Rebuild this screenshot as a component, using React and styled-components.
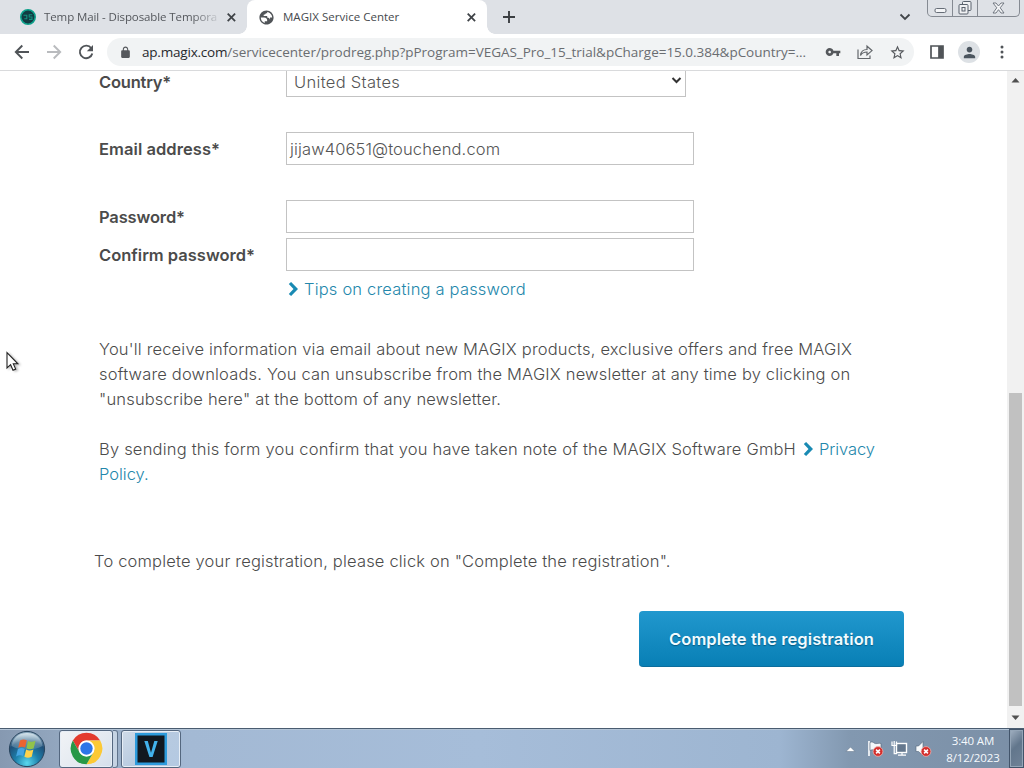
import React from 'react';
import styled, { createGlobalStyle } from 'styled-components';

const GlobalStyle = createGlobalStyle`
  *, *::before, *::after { box-sizing: border-box; }
  body { margin: 0; background: #fff; overflow: hidden; }
  svg { display: block; flex: none; }
`;

const Screen = styled.div`
  position: relative;
  display: flex;
  flex-direction: column;
  width: 1024px;
  height: 768px;
  overflow: hidden;
  font-family: "Open Sans", "Noto Sans", sans-serif;
`;

/* Browser frame */
const TabStrip = styled.header`
  display: flex;
  height: 34px;
  background: #dee1e6;
`;

const Tab = styled.div`
  position: relative;
  display: flex;
  align-items: center;
  width: ${(p) => p.$width}px;
  padding: 0 10px 0 ${(p) => p.$inset}px;
  color: ${(p) => (p.$active ? '#45494d' : '#54575c')};
  background: ${(p) => (p.$active ? '#fff' : 'transparent')};
  border-radius: 8px 8px 0 0;
  font-size: 11.5px;
  gap: 8px;

  &::before, &::after {
    content: ${(p) => (p.$active ? '""' : 'none')};
    position: absolute;
    bottom: 0;
    width: 8px;
    height: 8px;
  }
  &::before { left: -8px; background: radial-gradient(circle at 0 0, transparent 7.5px, #fff 8px); }
  &::after { right: -8px; background: radial-gradient(circle at 100% 0, transparent 7.5px, #fff 8px); }
`;

const TabTitle = styled.span`
  flex: 1;
  overflow: hidden;
  white-space: nowrap;
  line-height: 18px;
  letter-spacing: ${(p) => p.$tracking}px;
  ${(p) => p.$fade && 'mask-image: linear-gradient(90deg, #000 148px, transparent 178px);'}
`;

const NewTab = styled.div`
  display: flex;
  align-items: center;
  padding-left: 15px;
`;

const StripEnd = styled.div`
  display: flex;
  align-items: flex-start;
  margin-left: auto;
  gap: 16px;
  padding-right: 4px;
`;

const TabSearch = styled.div`
  padding-top: 13px;
`;

const WindowButtons = styled.div`
  display: flex;
  height: 17px;
  border: 1px solid #858a92;
  border-top: 0;
  border-radius: 0 0 5px 5px;
`;

const WindowButton = styled.div`
  display: flex;
  align-items: center;
  justify-content: center;
  width: ${(p) => p.$width}px;
  & + & { border-left: 1px solid #858a92; }
`;

const Toolbar = styled.nav`
  display: flex;
  align-items: center;
  height: 37px;
  padding: 0 14px;
  border-bottom: 1px solid #d9dadc;
  background: #fff;
`;

const NavButtons = styled.div`
  display: flex;
  gap: 16px;
`;

const AddressBar = styled.div`
  display: flex;
  align-items: center;
  width: 808px;
  height: 28px;
  margin-left: 13px;
  padding: 0 8px 0 12px;
  border-radius: 14px;
  background: #f1f3f4;
`;

const Url = styled.span`
  flex: 1;
  margin-left: 10px;
  white-space: nowrap;
  font-size: 13.5px;
  line-height: 20px;
  letter-spacing: -0.025px;
  color: #6a6d71;
`;

const Host = styled.span`
  color: #27292c;
  letter-spacing: -0.2px;
`;

const BarActions = styled.div`
  display: flex;
  gap: 16px;
`;

const ToolbarEnd = styled.div`
  display: flex;
  align-items: center;
  margin-left: 16px;
  gap: 14px;
`;

const Avatar = styled.div`
  display: flex;
  align-items: center;
  justify-content: center;
  width: 22px;
  height: 22px;
  border-radius: 50%;
  background: #dde1e5;
`;

/* Page */
const Viewport = styled.div`
  display: flex;
  height: 657px;
  overflow: hidden;
`;

const Page = styled.main`
  flex: 1;
  padding-left: 99px;
  font-family: Inter, "Open Sans", sans-serif;
  font-size: 16.5px;
  font-weight: 350;
  line-height: 25px;
  color: #4b4b4b;
`;

const Form = styled.form`
  display: flex;
  flex-direction: column;
  margin-top: -7px;
`;

const Field = styled.div`
  display: flex;
  align-items: center;
  height: 33px;
  margin-bottom: ${(p) => p.$gap}px;
`;

const Label = styled.label`
  width: 187px;
  padding-top: ${(p) => (p.$low ? 4 : 2)}px;
  font-weight: 600;
  letter-spacing: ${(p) => p.$tracking}px;
`;

const Box = styled.div`
  display: flex;
  align-items: center;
  justify-content: space-between;
  width: ${(p) => (p.$select ? 400 : 408)}px;
  height: 33px;
  padding: ${(p) => (p.$select ? '4px 3px 0 7px' : '2px 3px 0')};
  border: 1px solid #c3c3c3;
  background: #fff;
  color: #555;
  letter-spacing: ${(p) => p.$tracking || 0}px;
`;

const SelectArrow = styled.svg`
  margin-top: -3px;
`;

const TipLine = styled.div`
  display: flex;
  margin-left: 187px;
`;

const Link = styled.a`
  display: inline-flex;
  align-items: center;
  color: #2387ab;
  letter-spacing: ${(p) => p.$tracking}px;
  svg { margin: -2px 5px 0 2px; }
`;

const Paragraph = styled.p`
  display: flex;
  flex-direction: column;
  margin: ${(p) => p.$top}px 0 0 ${(p) => p.$shift || 0}px;
`;

const Line = styled.span`
  display: flex;
  white-space: pre;
  letter-spacing: ${(p) => p.$tracking}px;
`;

const Submit = styled.button`
  width: 265px;
  height: 56px;
  margin: 37px 0 0 540px;
  padding: 2px 0 0;
  border: 0;
  border-bottom: 1px solid #0b6d9c;
  border-radius: 4px;
  background: linear-gradient(#2198ce, #087fb5);
  color: #f1fbff;
  font: 600 16.5px/25px Inter, sans-serif;
  letter-spacing: 0.1px;
  text-shadow: 0 1px 1px #075b83;
`;

const Scrollbar = styled.div`
  display: flex;
  flex-direction: column;
  align-items: center;
  width: 17px;
  padding: 6px 0 7px;
  background: #f1f1f1;
`;

const Thumb = styled.div`
  width: 13px;
  height: 313px;
  margin: auto 0 9px;
  background: #c1c1c1;
`;

const Pointer = styled.div`
  position: absolute;
  left: 6px;
  top: 351px;
  filter: drop-shadow(2px 1px 1px #0004);
`;

/* Taskbar */
const Taskbar = styled.footer`
  display: flex;
  align-items: center;
  height: 40px;
  border-top: 1px solid #4a5c70;
  background: linear-gradient(90deg, #8699b1 0, #93a7bf 60px, #a3b9d4 190px, #a6bdd9 480px, #9db5d1 780px, #8298b0 850px, #7b8fa6 1024px);
  box-shadow: inset 0 1px #b4c5d7;
`;

const TaskButton = styled.div`
  display: flex;
  align-items: center;
  justify-content: center;
  width: ${(p) => p.$width}px;
  height: 38px;
  margin-left: ${(p) => p.$gap}px;
  border: 1px solid #54677f;
  border-radius: 3px;
  background: ${(p) => (p.$active ? 'linear-gradient(135deg, #f1f3f6, #e3e9f0 60%, #d4dfeb)' : 'linear-gradient(135deg, #d0dbe8, #b7cae0 50%, #b4c9e2)')};
  box-shadow: inset 0 0 0 1px #e7eef6;
`;

const StackEdge = styled.div`
  width: 5px;
  height: 38px;
  border: 1px solid #60748c;
  border-left: 0;
  border-radius: 0 3px 3px 0;
  background: #c5d3e3;
`;

const Orb = styled.div`
  margin-left: 8px;
`;

const Tray = styled.div`
  display: flex;
  align-items: center;
  height: 100%;
  margin-left: auto;
`;

const TrayIcons = styled.div`
  display: flex;
  align-items: center;
  gap: 7px;
`;

const TrayArrow = styled.svg`
  margin-right: 3px;
`;

const Clock = styled.div`
  width: 60px;
  margin: 0 6px 0 11px;
  text-align: center;
  font-size: 11.5px;
  line-height: 17px;
  letter-spacing: -0.12px;
  color: #f5f9fd;
`;

const ShowDesktop = styled.div`
  width: 15px;
  height: 100%;
  border: 1px solid #42546a;
  background: linear-gradient(135deg, #a2b1c2, #62768c 45%, #708297);
  box-shadow: inset 0 0 0 1px #94a5b7;
`;

const CloseIcon = () => (
  <svg width="11" height="11" viewBox="0 0 11 11"><path d="M1.7 1.7l7.4 7.4M9.1 1.7L1.7 9.1" stroke="#3f4347" strokeWidth="1.8" /></svg>
);

const Material = ({ d, fill = '#55585c', size = 16 }) => (
  <svg width={size} height={size} viewBox="0 0 24 24" fill={fill}><path d={d} /></svg>
);

const LinkArrow = () => (
  <svg width="11" height="14" viewBox="0 0 11 14"><path d="M.8 2.1L3.1 0 10 7l-6.900 7L.8 11.900 5.500 7z" fill="#198ab3" /></svg>
);

const TempMailIcon = () => (
  <svg width="16" height="16" viewBox="0 0 16 16">
    <circle cx="8" cy="8" r="7.2" fill="#113c42" stroke="#0da18b" strokeWidth="1.6" />
    <path d="M3.500 6.200h3.300v3.500H4.300M12.300 5.700H9.200V8h2.800v2.400H9" fill="none" stroke="#15917f" strokeWidth="1.1" />
  </svg>
);

const WindowsOrb = () => (
  <svg width="38" height="38" viewBox="0 0 38 38">
    <defs>
      <radialGradient id="orb" cx=".5" cy=".9" r=".85">
        <stop offset="0" stopColor="#5bd8ee" /><stop offset=".4" stopColor="#1d80ab" /><stop offset=".75" stopColor="#1f4f78" /><stop offset="1" stopColor="#87a5bb" />
      </radialGradient>
      <linearGradient id="gloss" x2="0" y2="1"><stop stopColor="#e5f0f5" stopOpacity=".85" /><stop offset="1" stopColor="#8eb2c6" stopOpacity=".25" /></linearGradient>
    </defs>
    <circle cx="19" cy="19" r="17.6" fill="url(#orb)" stroke="#28445d" />
    <path d="M3.5 16C5 7 11 3 19 3s14 4 15.500 13C25 21 13 21 3.500 16z" fill="url(#gloss)" />
    <path d="M12 10.500c2.500-1.500 4.500-1.400 6.800-.2l-1.700 7.300c-2.300-1.200-4.400-1.100-6.900.2z" fill="#ed6330" />
    <path d="M20 10.900c2.400 1.300 4.700 1.300 7.500-.1l-1.800 7.400c-2.600 1.400-4.900 1.300-7.300 0z" fill="#91c34b" />
    <path d="M9.900 19.100c2.500-1.300 4.600-1.400 6.900-.2l-1.700 7.200c-2.300-1.200-4.400-1.100-7 .3z" fill="#45a5e2" />
    <path d="M18.100 19.400c2.400 1.300 4.600 1.300 7.300 0l-1.700 7.300c-2.700 1.400-4.900 1.300-7.300 0z" fill="#ffd34b" />
  </svg>
);

const ChromeLogo = () => (
  <svg width="33" height="33" viewBox="0 0 48 48">
    <path d="M4.080 12.500A23 23 0 0 1 43.920 12.500L24 12.500A11.500 11.500 0 0 0 14.040 29.750z" fill="#e33b2e" />
    <path d="M43.920 12.500A23 23 0 0 1 24 47L33.960 29.750A11.500 11.500 0 0 0 24 12.500z" fill="#fcc934" />
    <path d="M24 47A23 23 0 0 1 4.080 12.500L14.040 29.750A11.500 11.500 0 0 0 33.960 29.750z" fill="#279847" />
    <circle cx="24" cy="24" r="11.500" fill="#fff" /><circle cx="24" cy="24" r="9" fill="#2b75e8" />
  </svg>
);

const VegasLogo = () => (
  <svg width="32" height="32" viewBox="0 0 32 32">
    <rect width="32" height="32" fill="#2d9bdc" /><rect x="2.500" y="2.500" width="27" height="27" fill="#111820" />
    <path d="M9.300 8h3.500L16 19.700 19.300 8h3.400l-5.100 16h-3.200z" fill="#42b2ec" />
  </svg>
);

const ErrorBadge = ({ x, y }) => (
  <g transform={`translate(${x} ${y})`}>
    <circle r="4.900" fill="#d42f2d" stroke="#f2bcb8" strokeWidth=".7" />
    <path d="M-1.900-1.900L1.900 1.900M1.900-1.900L-1.900 1.900" stroke="#fff" strokeWidth="1.500" />
  </g>
);

const FlagIcon = () => (
  <svg width="17" height="18" viewBox="0 0 17 18">
    <path d="M2 1v15" stroke="#fff" strokeWidth="1.600" /><path d="M3 2.500c3-1.700 4 1.300 6 1.100 2 0 3-.6 5-.1v7c-3-.7-4 .7-6 0-2-.8-3-1-5 0z" fill="#f4f7fa" stroke="#4f6074" strokeWidth=".6" />
    <ErrorBadge x={11} y={11.5} />
  </svg>
);

const NetworkIcon = () => (
  <svg width="17" height="18" viewBox="0 0 17 18">
    <rect x="5.500" y="3.500" width="10" height="9" fill="#65788e" stroke="#fff" strokeWidth="1.400" />
    <path d="M7 15.200h8M11 13v2M1 1.500v4h4.500v-4M3.200 5.500v8.200h3M3.200 1v4" fill="none" stroke="#fff" strokeWidth="1.200" />
  </svg>
);

const VolumeIcon = () => (
  <svg width="17" height="18" viewBox="0 0 17 18">
    <path d="M1 6h2.500L8 1.500v14L3.500 11.500H1z" fill="#f7fafc" stroke="#53657a" strokeWidth=".6" />
    <ErrorBadge x={11} y={11.5} />
  </svg>
);

export default function App() {
  return (
    <>
      <GlobalStyle />
      <Screen>
        <TabStrip>
          <Tab $width={247} $inset={20}>
            <TempMailIcon />
            <TabTitle $tracking={-0.1} $fade>Temp Mail - Disposable Tempora</TabTitle>
            <CloseIcon />
          </Tab>
          <Tab $active $width={240} $inset={11}>
            <Material d="M12 2C6.480 2 2 6.480 2 12s4.480 10 10 10 10-4.480 10-10S17.520 2 12 2zM4 12h4.400c3.410.02 4.920 1.730 4.540 5.120H9.500v2.470A8.010 8.010 0 0 1 4 12zm13 3c-.6-2-2-3-4-3v-2H8V8c2 0 3-.8 3-2h2V4.070c4 .5 7 4 7 7.930h-3z" fill="#505458" size={17} />
            <TabTitle $tracking={0.02}>MAGIX Service Center</TabTitle>
            <CloseIcon />
          </Tab>
          <NewTab>
            <svg width="14" height="14" viewBox="0 0 14 14"><path d="M7 1v12M1 7h12" stroke="#3b3e42" strokeWidth="1.9" /></svg>
          </NewTab>
          <StripEnd>
            <TabSearch>
              <svg width="12" height="8" viewBox="0 0 12 8"><path d="M1.500 1.500L6 6l4.500-4.500" fill="none" stroke="#414549" strokeWidth="1.800" /></svg>
            </TabSearch>
            <WindowButtons>
              <WindowButton $width={24}>
                <svg width="13" height="14" viewBox="0 0 13 14"><rect x="1" y="7.500" width="11" height="4" rx="1.500" fill="#f4f5f7" stroke="#666d77" /></svg>
              </WindowButton>
              <WindowButton $width={25}>
                <svg width="14" height="14" viewBox="0 0 14 14" fill="#f0f1f3" stroke="#59616c"><rect x="4.500" y=".500" width="8.500" height="9" rx="1" /><rect x="1" y="3.500" width="9" height="9.500" rx="1" /><rect x="4" y="6.500" width="3" height="3.500" /></svg>
              </WindowButton>
              <WindowButton $width={42}>
                <svg width="13" height="12" viewBox="0 0 13 12"><path d="M1 1h3l2.500 3L9 1h3L8.200 5.800 12 11H9L6.500 7.700 4 11H1l3.800-5.200z" fill="#f4f5f7" stroke="#666d77" strokeWidth=".9" /></svg>
              </WindowButton>
            </WindowButtons>
          </StripEnd>
        </TabStrip>
        <Toolbar>
          <NavButtons>
            <svg width="16" height="16" viewBox="0 0 16 16"><path d="M15 8H2M8.300 1.500L1.800 8l6.500 6.500" fill="none" stroke="#505458" strokeWidth="1.900" /></svg>
            <svg width="16" height="16" viewBox="0 0 16 16"><path d="M1 8h13M7.700 1.500L14.200 8l-6.500 6.500" fill="none" stroke="#b9bbbe" strokeWidth="1.900" /></svg>
            <svg width="16" height="16" viewBox="0 0 16 16"><path d="M13.300 4.200A6.300 6.300 0 1 0 14.300 9.500" fill="none" stroke="#505458" strokeWidth="1.900" /><path d="M15 1v6.200H8.800z" fill="#505458" /></svg>
          </NavButtons>
          <AddressBar>
            <Material d="M18 8h-1V6c0-2.760-2.240-5-5-5S7 3.240 7 6v2H6c-1.100 0-2 .9-2 2v10c0 1.100.9 2 2 2h12c1.100 0 2-.9 2-2V10c0-1.100-.9-2-2-2zM9 6c0-1.660 1.340-3 3-3s3 1.340 3 3v2H9V6z" size={13} />
            <Url><Host>ap.magix.com</Host>/servicecenter/prodreg.php?pProgram=VEGAS_Pro_15_trial&amp;pCharge=15.0.384&amp;pCountry=...</Url>
            <BarActions>
              <Material d="M12.650 10C11.830 7.670 9.610 6 7 6c-3.310 0-6 2.690-6 6s2.690 6 6 6c2.610 0 4.830-1.670 5.650-4H17v4h4v-4h2v-4H12.650zM7 14c-1.100 0-2-.9-2-2s.9-2 2-2 2 .9 2 2-.9 2-2 2z" />
              <svg width="16" height="16" viewBox="0 0 16 16" fill="none" stroke="#63676b" strokeWidth="1.200"><path d="M1 5.500v9h12v-3M3.500 11.500c.4-3.900 2.300-6 6.500-6V2.200L15 6.600l-5 4.300V8c-3 0-5 .8-6.500 3.500z" /></svg>
              <Material d="M22 9.240l-7.190-.62L12 2 9.190 8.630 2 9.240l5.460 4.730L5.820 21 12 17.270 18.180 21l-1.630-7.030L22 9.240zM12 15.400l-3.760 2.270 1-4.280-3.320-2.880 4.380-.38L12 6.100l1.710 4.040 4.380.38-3.320 2.880 1 4.280L12 15.400z" size={17} />
            </BarActions>
          </AddressBar>
          <ToolbarEnd>
            <svg width="14" height="14" viewBox="0 0 14 14"><path d="M1 1h12v12H1zM9 1v12" fill="none" stroke="#505458" strokeWidth="1.700" /><path d="M9 1h4v12H9z" fill="#505458" /></svg>
            <Avatar><Material d="M12 12c2.210 0 4-1.790 4-4s-1.790-4-4-4-4 1.790-4 4 1.790 4 4 4zm0 2c-2.670 0-8 1.340-8 4v2h16v-2c0-2.660-5.330-4-8-4z" size={17} fill="#4b555f" /></Avatar>
            <svg width="16" height="16" viewBox="0 0 16 16" fill="#505458"><circle cx="8" cy="3" r="1.500" /><circle cx="8" cy="8" r="1.500" /><circle cx="8" cy="13" r="1.500" /></svg>
          </ToolbarEnd>
        </Toolbar>
        <Viewport>
          <Page>
            <Form>
              <Field $gap={35}>
                <Label $low $tracking={-0.2}>Country*</Label>
                <Box $select $tracking={0.32}>United States<SelectArrow width="11" height="8" viewBox="0 0 11 8"><path d="M1.500 1l4 4 4-4" fill="none" stroke="#333" strokeWidth="2" /></SelectArrow></Box>
              </Field>
              <Field $gap={35}>
                <Label $tracking={0.06}>Email address*</Label>
                <Box $tracking={0.12}>jijaw40651@touchend.com</Box>
              </Field>
              <Field $gap={5}><Label $tracking={-0.15}>Password*</Label><Box /></Field>
              <Field $gap={6}><Label $tracking={0}>Confirm password*</Label><Box /></Field>
              <TipLine><Link $tracking={0.19}><LinkArrow />Tips on creating a password</Link></TipLine>
              <Paragraph $top={35}>
                <Line $tracking={0.18}>You'll receive information via email about new MAGIX products, exclusive offers and free MAGIX</Line>
                <Line $tracking={0.175}>software downloads. You can unsubscribe from the MAGIX newsletter at any time by clicking on</Line>
                <Line $tracking={0.17}>"unsubscribe here" at the bottom of any newsletter.</Line>
              </Paragraph>
              <Paragraph $top={25}>
                <Line $tracking={0.205}>By sending this form you confirm that you have taken note of the MAGIX Software GmbH <Link $tracking={-0.06}><LinkArrow />Privacy</Link></Line>
                <Line><Link $tracking={-0.02}>Policy.</Link></Line>
              </Paragraph>
              <Paragraph $top={62} $shift={-5}>
                <Line $tracking={0.18}>To complete your registration, please click on "Complete the registration".</Line>
              </Paragraph>
              <Submit type="button">Complete the registration</Submit>
            </Form>
          </Page>
          <Scrollbar>
            <svg width="9" height="6" viewBox="0 0 9 6"><path d="M.5 5.500L4.500 1l4 4.500z" fill="#505050" /></svg>
            <Thumb />
            <svg width="9" height="6" viewBox="0 0 9 6"><path d="M.5.500l4 4.500 4-4.500z" fill="#505050" /></svg>
          </Scrollbar>
        </Viewport>
        <Taskbar>
          <Orb><WindowsOrb /></Orb>
          <TaskButton $active $width={54} $gap={13}><ChromeLogo /></TaskButton>
          <StackEdge />
          <TaskButton $width={60} $gap={3}><VegasLogo /></TaskButton>
          <Tray>
            <TrayIcons>
              <TrayArrow width="13" height="8" viewBox="0 0 13 8"><path d="M2 6.500L6.500 2 11 6.500z" fill="#fff" stroke="#5d7086" strokeWidth=".5" /></TrayArrow>
              <FlagIcon /><NetworkIcon /><VolumeIcon />
            </TrayIcons>
            <Clock>3:40 AM<br />8/12/2023</Clock>
            <ShowDesktop />
          </Tray>
        </Taskbar>
        <Pointer>
          <svg width="15" height="22" viewBox="0 0 15 22"><path d="M1 1.500v15.500l3.600-3.300 2.400 5.600 2.700-1.200-2.400-5.300h4.600z" fill="#fff" stroke="#222" strokeWidth="1.100" /></svg>
        </Pointer>
      </Screen>
    </>
  );
}
